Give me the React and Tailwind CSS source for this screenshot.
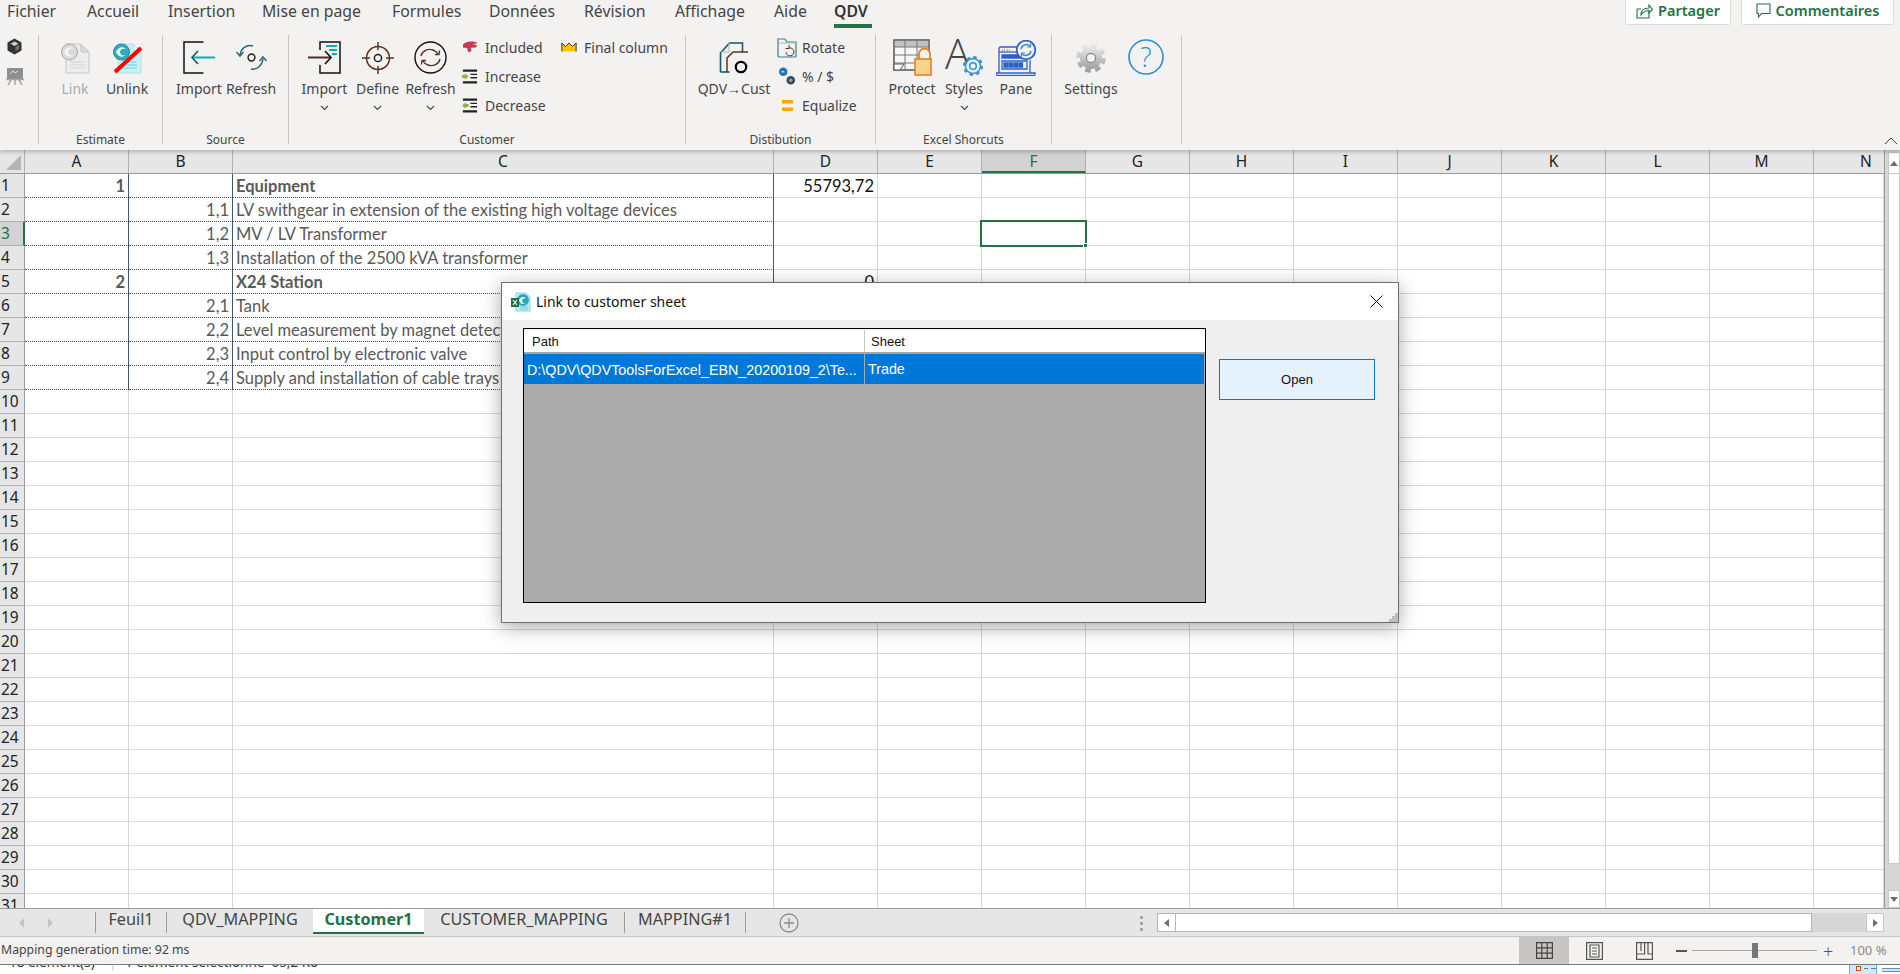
const TABS = [
  ['Fichier', 'w-[80px]'],
  ['Accueil', 'w-[81px]'],
  ['Insertion', 'w-[94px]'],
  ['Mise en page', 'w-[130px]'],
  ['Formules', 'w-[97px]'],
  ['Données', 'w-[95px]'],
  ['Révision', 'w-[91px]'],
  ['Affichage', 'w-[99px]'],
  ['Aide', 'w-[60px]'],
];

const COLUMNS = [
  ['A', 'w-[104px]'],
  ['B', 'w-[104px]'],
  ['C', 'w-[541px]'],
  ['D', 'w-[104px]'],
  ['E', 'w-[104px]'],
  ['F', 'w-[104px]'],
  ['G', 'w-[104px]'],
  ['H', 'w-[104px]'],
  ['I', 'w-[104px]'],
  ['J', 'w-[104px]'],
  ['K', 'w-[104px]'],
  ['L', 'w-[104px]'],
  ['M', 'w-[104px]'],
  ['N', 'w-[70px]'],
];

const SHEET = {
  1: { A: '1', C: 'Equipment', D: '55793,72', bold: true },
  2: { B: '1,1', C: 'LV swithgear in extension of the existing high voltage devices' },
  3: { B: '1,2', C: 'MV / LV Transformer' },
  4: { B: '1,3', C: 'Installation of the 2500 kVA transformer' },
  5: { A: '2', C: 'X24 Station', D: '0', bold: true },
  6: { B: '2,1', C: 'Tank' },
  7: { B: '2,2', C: 'Level measurement by magnet detector' },
  8: { B: '2,3', C: 'Input control by electronic valve' },
  9: { B: '2,4', C: 'Supply and installation of cable trays' },
};

const ROWS = Array.from({ length: 31 }, (_, i) => i + 1);

const Chevron = () => (
  <svg width="9" height="6" viewBox="0 0 9 6" fill="none" stroke="#444" strokeWidth="1.1">
    <path d="M1 1l3.5 3.5L8 1" />
  </svg>
);

const CubeIcon = () => (
  <svg width="17" height="17" viewBox="0 0 17 17">
    <path d="M8.5.5l7 4v8l-7 4-7-4v-8z" fill="#333" />
    <path d="M8.5 3.5l4 2.2-4 2.3-4-2.3z" fill="#d0d0d0" />
    <path d="M9.5 9l3.5-2v4l-3.5 2z" fill="#777" />
  </svg>
);

const BoardIcon = () => (
  <svg width="18" height="19" viewBox="0 0 18 19">
    <rect x="1" y="1" width="16" height="11" fill="#8f8f8f" />
    <path d="M4 7l3-3 2 2 3-2" stroke="#ddd" fill="none" />
    <path d="M0 12.5h18M5 13l-3 5M13 13l3 5M9 13v5" stroke="#a5a5a5" strokeWidth="1.5" />
  </svg>
);

const DocGlobe = ({ off }) => (
  <svg width="31" height="32" viewBox="0 0 31 32" className="overflow-visible">
    <path d="M6 2h15l8 8v21H6z" fill={off ? '#ededed' : '#c9f2f7'} stroke={off ? '#c8c6c4' : '#b7dde2'} />
    <path d="M21 2v8h8z" fill={off ? '#d9d9d9' : '#e8f9fb'} stroke={off ? '#c8c6c4' : '#b7dde2'} />
    <path d="M10 20h15M10 23h15M10 26h15" stroke={off ? '#d2d2d2' : '#5fd0e0'} strokeWidth="1.2" />
    <circle cx="9.5" cy="10" r="8" fill={off ? '#dadada' : '#32a9bd'} stroke={off ? '#aaa' : '#1e8ca0'} />
    <path d="M4 10c2-5 7-6 10-3-3-1-6 0-6 3s3 4 5 3c-2 3-7 2-9-3z" fill={off ? '#f4f4f4' : '#e8fbff'} />
    {!off && <path d="M3 30L29 6" stroke="#ff0000" strokeWidth="4" />}
  </svg>
);

const ImportSourceIcon = () => (
  <svg width="33" height="33" viewBox="0 0 33 33" fill="none">
    <path d="M20.5 1H1v31h19.5" stroke="#111" strokeWidth="1.5" />
    <path d="M10 16.5h22" stroke="#00b4b4" strokeWidth="2" />
    <path d="M15 10l-6 6.5 6 6.5" stroke="#0f5a5e" strokeWidth="1.6" />
  </svg>
);

const RefreshSourceIcon = () => (
  <svg width="33" height="33" viewBox="0 0 33 33" fill="none" stroke="#2b6a74" strokeWidth="1.5">
    <circle cx="16.5" cy="16.5" r="3.4" stroke="#222" />
    <path d="M5 14C6 7 12 3 18 5" />
    <path d="M1.5 11L5 15l3.5-4" />
    <path d="M28 18c-1 7-6 11-12 10" />
    <path d="M24.5 20L28 16l3.5 4" />
  </svg>
);

const ImportCustIcon = () => (
  <svg width="33" height="33" viewBox="0 0 33 33" fill="none">
    <path d="M12 9V1h20v31H12v-8" stroke="#111" strokeWidth="1.5" />
    <path d="M18 5h11M21 9h8M24 13h5" stroke="#00b4b4" strokeWidth="2" />
    <path d="M0 16.5h22" stroke="#4e3121" strokeWidth="2" />
    <path d="M17 10l6 6.5-6 6.5" stroke="#111" strokeWidth="1.6" />
  </svg>
);

const DefineIcon = () => (
  <svg width="32" height="32" viewBox="0 0 32 32" fill="none" stroke="#5a3420" strokeWidth="1.5">
    <circle cx="16" cy="16" r="11.5" />
    <circle cx="16" cy="16" r="3.6" stroke="#222" />
    <path d="M16 0v8M16 24v8M0 16h8M24 16h8" />
  </svg>
);

const RefreshCustIcon = () => (
  <svg width="33" height="33" viewBox="0 0 33 33" fill="none">
    <circle cx="16.5" cy="16.5" r="15.5" stroke="#111" strokeWidth="1.4" />
    <path d="M7 15c1-5 7-8 12-6 2 .8 4 2 5 4" stroke="#5a3420" strokeWidth="1.4" />
    <path d="M26 18c-1 5-7 8-12 6-2-.8-4-2-5-4" stroke="#5a3420" strokeWidth="1.4" />
    <path d="M21 13.5h4l.5-4M12 19.5H8l-.5 4" stroke="#5a3420" strokeWidth="1.4" />
  </svg>
);

const IncludedIcon = () => (
  <svg width="16" height="12" viewBox="0 0 16 12">
    <path d="M1 3.500C3 1 7 0 11 .5c2 .2 4 .5 4 2l-5 .5 5 1-1 2.500-5 .2.500 3.300-3 1.500-1.500-4.500-4-.5z" fill="#c83a52" />
  </svg>
);

const IndentIcon = ({ back }) => (
  <svg width="17" height="15" viewBox="0 0 17 15">
    <path d="M1 0h15v2.500H1zM1 12.500h15V15H1zM9 4.500h7V6H9zM9 8h7v1.500H9z" fill="#222" />
    {back ? (
      <path d="M0 7.500L4 4v2h3v3H4v2z" fill="#8fb34a" />
    ) : (
      <path d="M7 7.500L3 4v2H0v3h3v2z" fill="#8fb34a" />
    )}
  </svg>
);

const CrownIcon = () => (
  <svg width="18" height="12" viewBox="0 0 18 12">
    <path d="M1 1.500l4 4 4-4 4 4 4-4V11H1z" fill="#ffc400" />
    <path d="M1 11V1.500l4 4 4-4 4 4 4-4V11" fill="none" stroke="#222" strokeWidth="1" />
  </svg>
);

const QdvCustIcon = () => (
  <svg width="30" height="33" viewBox="0 0 30 33" fill="none">
    <path d="M1.500 31V12l9-10h13v9" stroke="#165a66" strokeWidth="1.600" />
    <path d="M1.500 31h9" stroke="#165a66" strokeWidth="1.600" />
    <path d="M10 2v9H2" stroke="#9bbcc2" />
    <path d="M8 31V17l6-6h15" stroke="#5a3420" strokeWidth="1.500" />
    <circle cx="22" cy="26" r="5.200" stroke="#000" strokeWidth="2.200" />
  </svg>
);

const RotateIcon = () => (
  <svg width="20" height="21" viewBox="0 0 20 21" fill="none" className="overflow-visible">
    <path d="M1 18V2h7l2 3h9v14a1 1 0 0 1-1 1H2.500A1.500 1.500 0 0 1 1 18z" stroke="#3d7f8c" strokeWidth="1.200" />
    <path d="M2 6h17" stroke="#9bbcc2" />
    <path d="M9 15a4 4 0 1 0 3-4M12 8v3.500H8.500" stroke="#5a3420" strokeWidth="1" />
  </svg>
);

const PercentIcon = () => (
  <svg width="17" height="18" viewBox="0 0 17 18">
    <circle cx="4.500" cy="4.500" r="4.500" fill="#1f77b4" />
    <path d="M2.500 4.500h3" stroke="#fff" strokeWidth="1.200" />
    <circle cx="12.500" cy="13.500" r="4.500" fill="#1f4e79" />
    <circle cx="12.500" cy="13.500" r="1.800" fill="#e8883a" />
  </svg>
);

const EqualizeIcon = () => (
  <svg width="11" height="11" viewBox="0 0 11 11">
    <path d="M0 0h11v3.500H0zM0 7.500h11V11H0z" fill="#ffa500" />
  </svg>
);

const ProtectIcon = () => (
  <svg width="39" height="37" viewBox="0 0 39 37" fill="none">
    <path d="M1 1h35v23l-6 7H1z" fill="#f7f7f7" stroke="#555" strokeWidth="1.500" />
    <path d="M1 2h35v6H1z" fill="#8c8c8c" opacity="0.500" />
    <path d="M1 8h35M1 16h35M1 24h30M12 1v30M24 1v30" stroke="#777" />
    <path d="M1 25h10l-4 6H1z" fill="#fff" stroke="#555" />
    <path d="M26 20v-5a5.500 5.500 0 0 1 11 0v5" fill="#f3f2f1" stroke="#e0812b" strokeWidth="1.800" />
    <rect x="22" y="20" width="16" height="16" fill="#f8d488" stroke="#e0812b" strokeWidth="1.600" />
  </svg>
);

const BlueGear = () => (
  <svg width="20" height="20" viewBox="0 0 20 20" fill="none" stroke="#2a8fd6" className="absolute right-0 bottom-0">
    <circle cx="10" cy="10" r="7.500" fill="#f3f2f1" strokeWidth="1.500" />
    <circle cx="10" cy="10" r="9" strokeWidth="2" strokeDasharray="3.500 3.570" />
    <circle cx="10" cy="10" r="3.300" strokeWidth="1.500" />
  </svg>
);

const PaneIcon = () => (
  <svg width="40" height="36" viewBox="0 0 40 36" fill="none" stroke="#2f5fc4" strokeWidth="1.300">
    <path d="M3 33V9a2 2 0 0 1 2-2h20M34 20v13" />
    <path d="M0 33h39v1a1.500 1.500 0 0 1-1.500 1.500h-36A1.500 1.500 0 0 1 0 34z" fill="#fff" />
    <path d="M3 12h22" />
    <path d="M6 10h3M11 10h3" strokeWidth="1" strokeDasharray="1 1" />
    <path d="M6 15h20v3H6z" fill="#2f5fc4" />
    <path d="M6 21h25v8H6z" />
    <path d="M8 23h3.500v4H8zM13 23h3.500v4H13zM18 23h3.500v4H18zM23 23h3.500v4H23z" fill="#2f5fc4" />
    <circle cx="30" cy="10" r="9.300" fill="#f3f2f1" strokeWidth="1.800" />
    <path d="M25 9a5.500 5.500 0 0 1 9-3M35 11a5.500 5.500 0 0 1-9 3" stroke="#2a8fd6" strokeWidth="1.500" />
    <path d="M34.500 3.500V7H31M25.500 16.500V13H29" stroke="#2a8fd6" strokeWidth="1.200" />
  </svg>
);

const SettingsIcon = () => (
  <svg width="30" height="30" viewBox="0 0 30 30">
    <defs>
      <linearGradient id="gearFill" x1="0" y1="0" x2="0" y2="1">
        <stop offset="0" stopColor="#e8e8e8" />
        <stop offset="1" stopColor="#a0a0a0" />
      </linearGradient>
    </defs>
    <circle cx="15" cy="15" r="11" fill="url(#gearFill)" />
    <circle cx="15" cy="15" r="12.500" fill="none" stroke="url(#gearFill)" strokeWidth="4.500" strokeDasharray="5.600 4.220" />
    <circle cx="15" cy="15" r="5" fill="#7a7a7a" />
    <circle cx="15" cy="15" r="4" fill="#f3f2f1" />
  </svg>
);

const HelpIcon = () => (
  <svg width="36" height="36" viewBox="0 0 36 36">
    <circle cx="18" cy="18" r="17" fill="none" stroke="#2a8fd6" strokeWidth="1.600" />
    <text x="18" y="27.500" textAnchor="middle" fontSize="27" fill="#2a8fd6" fontFamily="Open Sans, sans-serif" fontWeight="300">?</text>
  </svg>
);

const ShareIcon = () => (
  <svg width="17" height="17" viewBox="0 0 17 17" fill="none" stroke="#217346" strokeWidth="1.100">
    <path d="M1 7h4M1 7v9h12v-6" />
    <path d="M5 13c0-5 3-7 8-7V3l3.500 4.500L13 11V8.500c-3.500 0-6 1.500-8 4.500z" />
  </svg>
);

const CommentIcon = () => (
  <svg width="15" height="15" viewBox="0 0 15 15" fill="none" stroke="#217346" strokeWidth="1.100">
    <path d="M1 1h13v9.500H5.500L2.500 14v-3.500H1z" />
  </svg>
);

const TitleIcon = () => (
  <svg width="20" height="20" viewBox="0 0 20 20">
    <path d="M5 1h10l4 4v14H5z" fill="#bfeef5" stroke="#8fd3dd" />
    <circle cx="12" cy="8" r="6" fill="#2ea5ba" />
    <path d="M8 8c1-3 5-4 7-2-2 0-4 1-4 3s2 2 3 2c-2 2-5 1-6-3z" fill="#e8fbff" />
    <path d="M9 15h8M9 17h8" stroke="#5fd0e0" />
    <rect x="0" y="6" width="8" height="9" fill="#217346" />
    <path d="M2 8l4 5M6 8l-4 5" stroke="#fff" strokeWidth="1.100" />
  </svg>
);

const Triangle = ({ dir }) => {
  const d = { up: 'M0 5l4-5 4 5z', down: 'M0 0l4 5 4-5z', left: 'M5 0L0 4l5 4z', right: 'M0 0l5 4-5 4z' }[dir];
  const size = dir === 'up' || dir === 'down' ? [8, 5] : [5, 8];
  return (
    <svg width={size[0]} height={size[1]} viewBox={`0 0 ${size[0]} ${size[1]}`}>
      <path d={d} fill="#6f6f6f" />
    </svg>
  );
};

const BigButton = ({ label, icon, chevron, disabled, className }) => (
  <div className={`flex flex-col items-center shrink-0 ${className}`}>
    <div className="h-[33px] mt-[6px] flex items-center justify-center">{icon}</div>
    <div className={`mt-[5px] h-[20px] leading-[20px] whitespace-nowrap ${disabled ? 'text-[#aaa]' : 'text-[#444]'}`}>{label}</div>
    {chevron && <div className="mt-[6px] h-[6px] flex"><Chevron /></div>}
  </div>
);

const SmallRow = ({ icon, label }) => (
  <div className="h-[24px] flex items-center">
    <div className="w-[16px] mr-[7px] flex items-center justify-center shrink-0">{icon}</div>
    <span className="whitespace-nowrap text-[#444]">{label}</span>
  </div>
);

const Group = ({ label, className, children }) => (
  <div className={`relative h-[109px] border-r border-[#c8c6c4] shrink-0 flex ${className}`}>
    {children}
    <div className="absolute left-0 right-0 bottom-[-4px] h-[16px] leading-[16px] text-center text-[12px] text-[#444] whitespace-nowrap">{label}</div>
  </div>
);

const Ribbon = () => (
  <div className="relative z-10 h-[150px] bg-[#f3f2f1] shadow-[0_2px_4px_rgba(0,0,0,0.22)] font-['Noto_Sans',sans-serif] text-[14px] shrink-0">
    <div className="h-[28px] pl-[7px] flex text-[#444] text-[15.800px]">
      {TABS.map(([name, width]) => (
        <div key={name} className={`${width} h-[24px] leading-[23px] whitespace-nowrap shrink-0`}>{name}</div>
      ))}
      <div className="h-[28px] w-[38px] leading-[23px] font-semibold text-[#333] border-b-[4px] border-[#217346] shrink-0">QDV</div>
      <div className="ml-auto mr-[6px] flex gap-[10px] items-start text-[#217346] font-semibold text-[14.500px]">
        <div className="w-[106px] h-[25px] pb-[3px] bg-white border border-t-0 border-[#dcdcdc] rounded-b-[3px] flex items-center justify-center gap-[5px]">
          <ShareIcon />
          <span>Partager</span>
        </div>
        <div className="w-[153px] h-[25px] pb-[3px] bg-white border border-t-0 border-[#dcdcdc] rounded-b-[3px] flex items-center justify-center gap-[5px]">
          <CommentIcon />
          <span>Commentaires</span>
        </div>
      </div>
    </div>
    <div className="mt-[7px] flex">
      <div className="w-[39px] h-[109px] border-r border-[#c8c6c4] shrink-0 flex flex-col items-center pt-[3px] gap-[12px] pr-[9px]">
        <CubeIcon />
        <BoardIcon />
      </div>
      <Group label="Estimate" className="w-[124px] pl-[10px]">
        <BigButton className="w-[52px]" label="Link" icon={<DocGlobe off />} disabled />
        <BigButton className="w-[52px]" label="Unlink" icon={<DocGlobe />} />
      </Group>
      <Group label="Source" className="w-[126px] pl-[10px]">
        <BigButton className="w-[52px]" label="Import" icon={<ImportSourceIcon />} />
        <BigButton className="w-[52px]" label="Refresh" icon={<RefreshSourceIcon />} />
      </Group>
      <Group label="Customer" className="w-[397px] pl-[9px]">
        <BigButton className="w-[53px]" label="Import" icon={<ImportCustIcon />} chevron />
        <BigButton className="w-[53px]" label="Define" icon={<DefineIcon />} chevron />
        <BigButton className="w-[53px]" label="Refresh" icon={<RefreshCustIcon />} chevron />
        <div className="ml-[5px] w-[99px] flex flex-col gap-[5px]">
          <SmallRow icon={<IncludedIcon />} label="Included" />
          <SmallRow icon={<IndentIcon />} label="Increase" />
          <SmallRow icon={<IndentIcon back />} label="Decrease" />
        </div>
        <div>
          <SmallRow icon={<CrownIcon />} label="Final column" />
        </div>
      </Group>
      <Group label="Distibution" className="w-[190px] pl-[12px]">
        <BigButton className="w-[72px]" label="QDV→Cust" icon={<QdvCustIcon />} />
        <div className="ml-[9px] flex flex-col gap-[5px]">
          <SmallRow icon={<RotateIcon />} label="Rotate" />
          <SmallRow icon={<PercentIcon />} label="% / $" />
          <SmallRow icon={<EqualizeIcon />} label="Equalize" />
        </div>
      </Group>
      <Group label="Excel Shorcuts" className="w-[176px] pl-[10px]">
        <BigButton
          className="w-[52px]"
          label="Protect"
          icon={<ProtectIcon />}
        />
        <BigButton
          className="w-[52px]"
          label="Styles"
          chevron
          icon={
            <div className="relative w-[38px] h-[38px] -mt-[2px]">
              <div className="absolute left-0 top-[-9px] text-[42px] leading-[48px] font-light text-[#444] font-['Open_Sans',sans-serif]">A</div>
              <BlueGear />
            </div>
          }
        />
        <BigButton className="w-[52px]" label="Pane" icon={<PaneIcon />} />
      </Group>
      <Group label="" className="w-[130px] pl-[8px]">
        <BigButton className="w-[62px]" label="Settings" icon={<SettingsIcon />} />
        <div className="ml-[6px] mt-[4px]"><HelpIcon /></div>
      </Group>
    </div>
    <svg width="14" height="8" viewBox="0 0 14 8" fill="none" stroke="#444" className="absolute right-[2px] top-[137px]">
      <path d="M1 7l6-6 6 6" />
    </svg>
  </div>
);

const Cell = ({ row, col, width }) => {
  const data = SHEET[row];
  const value = data ? data[col] : null;
  const boxed = row <= 9 && (col === 'A' || col === 'B' || col === 'C');
  const rightAligned = col !== 'C';
  return (
    <div
      className={`${width} relative h-full shrink-0 border-b border-r px-[3px] leading-[25px] whitespace-nowrap overflow-visible ${
        boxed
          ? 'border-r-[#44546a] border-b-[#44546a] [border-bottom-style:dotted]'
          : 'border-[#d6d6d6]'
      } ${rightAligned ? 'text-right' : 'text-left'} ${col === 'D' ? 'text-[#111]' : 'text-[#595959]'} ${
        data && data.bold && col !== 'D' ? 'font-bold' : ''
      }`}
    >
      {value}
      {row === 3 && col === 'F' && (
        <div className="absolute -left-[2px] -top-[2px] -right-[2px] -bottom-[2px] border-2 border-[#217346] z-[1]">
          <div className="absolute -right-[3px] -bottom-[3px] w-[5px] h-[5px] bg-[#217346] border border-white" />
        </div>
      )}
    </div>
  );
};

const Grid = () => (
  <div className="flex-1 min-h-0 flex overflow-hidden bg-white">
    <div className="flex-1 min-w-0 overflow-hidden">
      <div className="flex h-[24px] bg-[#e6e6e6] border-b border-[#9b9b9b] font-['Noto_Sans',sans-serif] text-[15.500px] text-[#222]">
        <div className="w-[25px] shrink-0 border-r border-[#b1b1b1] flex items-end justify-end pr-[3px] pb-[3px]">
          <svg width="15" height="15" viewBox="0 0 15 15"><path d="M15 0v15H0z" fill="#b4b4b4" /></svg>
        </div>
        {COLUMNS.map(([name, width]) => (
          <div
            key={name}
            className={`${width} shrink-0 text-center leading-[23px] border-r border-[#b1b1b1] ${
              name === 'F' ? 'bg-[#d2d2d2] text-[#217346] border-b-2 border-b-[#217346]' : ''
            } ${name === 'N' ? 'pl-[34px] border-r-0' : ''}`}
          >
            {name}
          </div>
        ))}
      </div>
      {ROWS.map((row) => (
        <div key={row} className="flex h-[24px] font-['Lato',sans-serif] text-[16.500px]">
          <div
            className={`w-[25px] shrink-0 font-['Noto_Sans',sans-serif] text-[15.500px] leading-[23px] pl-[1px] border-b border-[#b1b1b1] ${
              row === 3
                ? 'bg-[#d2d2d2] text-[#217346] border-r-2 border-r-[#217346]'
                : 'bg-[#e6e6e6] text-[#222] border-r border-r-[#9b9b9b]'
            }`}
          >
            {row}
          </div>
          {COLUMNS.map(([name, width]) => (
            <Cell key={name} row={row} col={name} width={width} />
          ))}
        </div>
      ))}
    </div>
    <div className="w-[16px] shrink-0 flex flex-col bg-[#d6d6d6] border-l border-[#9b9b9b] pl-[3px]">
      <div className="h-[22px] mt-[2px] bg-white border border-[#c8c8c8] flex items-center justify-center"><Triangle dir="up" /></div>
      <div className="h-[690px] bg-white border border-[#c8c8c8] border-t-0" />
      <div className="flex-1" />
      <div className="h-[18px] bg-white border border-[#c8c8c8] flex items-center justify-center"><Triangle dir="down" /></div>
    </div>
  </div>
);

const SHEET_TABS = [
  ['Feuil1', 'w-[71px]', 'border-l border-[#9b9b9b]'],
  ['QDV_MAPPING', 'w-[147px]', 'border-l border-[#9b9b9b]'],
  ['Customer1', 'w-[111px]', ''],
  ['CUSTOMER_MAPPING', 'w-[200px]', ''],
  ['MAPPING#1', 'w-[122px]', 'border-l border-r border-[#9b9b9b]'],
];

const TabBar = () => (
  <div className="h-[29px] shrink-0 bg-[#e6e6e6] border-t border-[#9b9b9b] border-b border-b-[#c6c6c6] flex font-['Noto_Sans',sans-serif] text-[16.200px] text-[#444]">
    <div className="w-[95px] shrink-0 flex items-center pl-[19px] gap-[24px] h-[27px]">
      <svg width="5" height="10" viewBox="0 0 5 10"><path d="M5 0L0 5l5 5z" fill="#c4c4c4" /></svg>
      <svg width="5" height="10" viewBox="0 0 5 10"><path d="M0 0l5 5-5 5z" fill="#c4c4c4" /></svg>
    </div>
    {SHEET_TABS.map(([name, width, border]) =>
      name === 'Customer1' ? (
        <div key={name} className={`${width} h-[25px] bg-white border-b-2 border-[#217346] text-center leading-[21px] font-bold text-[#217346] shrink-0`}>
          {name}
        </div>
      ) : (
        <div key={name} className={`${width} h-[21px] mt-[3px] text-center leading-[15px] whitespace-nowrap shrink-0 ${border}`}>
          {name}
        </div>
      )
    )}
    <div className="ml-[33px] mt-[4px] w-[20px] h-[20px] shrink-0">
      <svg width="20" height="20" viewBox="0 0 20 20" fill="none" stroke="#8a8a8a" strokeWidth="1.300">
        <circle cx="10" cy="10" r="9" />
        <path d="M10 5v10M5 10h10" />
      </svg>
    </div>
    <div className="ml-auto flex h-[27px] items-start">
      <div className="mt-[7px] mr-[14px] flex flex-col gap-[3px]">
        <span className="block w-[3px] h-[3px] bg-[#a6a6a6]" />
        <span className="block w-[3px] h-[3px] bg-[#a6a6a6]" />
        <span className="block w-[3px] h-[3px] bg-[#a6a6a6]" />
      </div>
      <div className="mt-[4px] w-[727px] h-[19px] mr-[16px] flex bg-[#d6d6d6]">
        <div className="w-[19px] bg-white border border-[#b5b5b5] flex items-center justify-center"><Triangle dir="left" /></div>
        <div className="w-[636px] bg-white border border-l-0 border-[#b5b5b5]" />
        <div className="flex-1" />
        <div className="w-[18px] bg-white border border-[#c8c8c8] flex items-center justify-center"><Triangle dir="right" /></div>
      </div>
    </div>
  </div>
);

const StatusBar = () => (
  <div className="h-[28px] shrink-0 bg-[#f3f2f1] border-b border-[#7a7a7a] flex items-center pl-[1px] font-['Noto_Sans',sans-serif] text-[12.300px] text-[#444]">
    <span>Mapping generation time: 92 ms</span>
    <div className="ml-auto flex items-center h-full">
      <div className="w-[50px] h-full bg-[#c8c6c4] flex items-center justify-center">
        <svg width="17" height="17" viewBox="0 0 17 17" fill="none" stroke="#444" strokeWidth="1.200">
          <path d="M.6.6h15.800v15.800H.6zM5.800.6v15.800M11.200.6v15.800M.6 5.800h15.800M.6 11.200h15.800" />
        </svg>
      </div>
      <div className="w-[50px] flex justify-center">
        <svg width="17" height="18" viewBox="0 0 17 18" fill="none" stroke="#555" strokeWidth="1.200">
          <path d="M.6.6h15.800v16.800H.6zM4 3h9v12H4zM6 6h5M6 9h5M6 12h5" />
        </svg>
      </div>
      <div className="w-[50px] flex justify-center">
        <svg width="17" height="18" viewBox="0 0 17 18" fill="none" stroke="#555" strokeWidth="1.200">
          <path d="M.6.6h15.800v16.800H.6zM.6 12h8V.6M5 .6V9M12 .6V12h4.400" />
        </svg>
      </div>
      <div className="w-[11px] h-[2px] bg-[#555] ml-[7px]" />
      <div className="relative w-[125px] h-[1px] bg-[#a6a6a6] ml-[5px]">
        <div className="absolute left-[60px] -top-[7px] w-[6px] h-[15px] bg-[#767676]" />
      </div>
      <span className="ml-[6px] w-[10px] text-[18px] leading-[18px] font-light text-[#555]">+</span>
      <span className="ml-[17px] w-[50px] text-[#8a8a8a] text-[13px] whitespace-nowrap">100 %</span>
    </div>
  </div>
);

const Explorer = () => (
  <div className="relative h-[9px] bg-white overflow-hidden font-['Noto_Sans',sans-serif] text-[13.500px] leading-[16px] text-[#333]">
    <div className="flex -mt-[11px] whitespace-nowrap">
      <span className="ml-[9px] w-[100px]">18 élément(s)</span>
      <span className="w-[16px] text-[#ccc]">|</span>
      <span>1 élément sélectionné&nbsp;&nbsp;65,2 Ko</span>
    </div>
    <div className="absolute left-[1849px] top-0 w-[28px] h-[9px] bg-[#cce8ff] border-x border-[#5fb4ea] flex items-start gap-[3px] pl-[6px]">
      <span className="block w-[5px] h-[5px] mt-[1px] bg-white border border-[#b5522f]" />
      <span className="block w-[5px] h-[1px] mt-[3px] bg-[#777]" />
      <span className="block w-[5px] h-[1px] mt-[3px] bg-[#777]" />
    </div>
    <div className="absolute left-[1882px] top-[3px] w-[18px] h-[4px] bg-[#cfe3f5] border-y border-[#6b8fb3]" />
  </div>
);

const Dialog = () => (
  <div className="absolute left-[501px] top-[282px] z-20 w-[898px] h-[341px] flex flex-col bg-[#efefef] border border-[#6e6e6e] shadow-[0_4px_18px_rgba(0,0,0,0.35)] font-['Liberation_Sans',sans-serif] text-[13px]">
    <div className="h-[37px] shrink-0 bg-white flex items-center pl-[9px] pr-[14px] font-['Noto_Sans',sans-serif] text-[14px] text-[#111]">
      <TitleIcon />
      <span className="ml-[5px]">Link to customer sheet</span>
      <svg width="13" height="13" viewBox="0 0 13 13" stroke="#111" className="ml-auto mr-[1px]">
        <path d="M.5.5l12 12M12.500.5l-12 12" />
      </svg>
    </div>
    <div className="flex-1 flex pt-[8px] pl-[21px] relative">
      <div className="w-[683px] h-[275px] bg-[#ababab] border border-black flex flex-col shrink-0">
        <div className="h-[25px] bg-white border-t border-[#f0f0f0] border-b-2 border-b-[#a5a5a5] flex leading-[23px] text-[#111]">
          <div className="w-[341px] pl-[8px] border-r border-[#c8c8c8]">Path</div>
          <div className="pl-[6px]">Sheet</div>
        </div>
        <div className="h-[30px] bg-[#0078d7] flex items-center text-white mr-[1px] text-[14.300px]">
          <div className="w-[341px] h-full pl-[3px] leading-[32px] border-r border-[#a8a8a8] whitespace-nowrap overflow-hidden">D:\QDV\QDVToolsForExcel_EBN_20200109_2\Te...</div>
          <div className="pl-[3px] leading-[32px]">Trade</div>
        </div>
      </div>
      <div className="ml-[13px] mt-[31px] w-[156px] h-[41px] bg-[#e5f1fb] border border-[#0078d7] flex items-center justify-center text-[#111] shrink-0">
        Open
      </div>
      <svg width="9" height="9" viewBox="0 0 9 9" className="absolute right-0 bottom-0" fill="#bdbdbd">
        <path d="M6 0h3v3H6zM3 3h3v3H3zM6 3h3v3H6zM0 6h3v3H0zM3 6h3v3H3zM6 6h3v3H6z" />
      </svg>
    </div>
  </div>
);

export default function App() {
  return (
    <div className="relative w-[1900px] h-[974px] overflow-hidden flex flex-col bg-white">
      <Ribbon />
      <Grid />
      <TabBar />
      <StatusBar />
      <Explorer />
      <Dialog />
    </div>
  );
}
